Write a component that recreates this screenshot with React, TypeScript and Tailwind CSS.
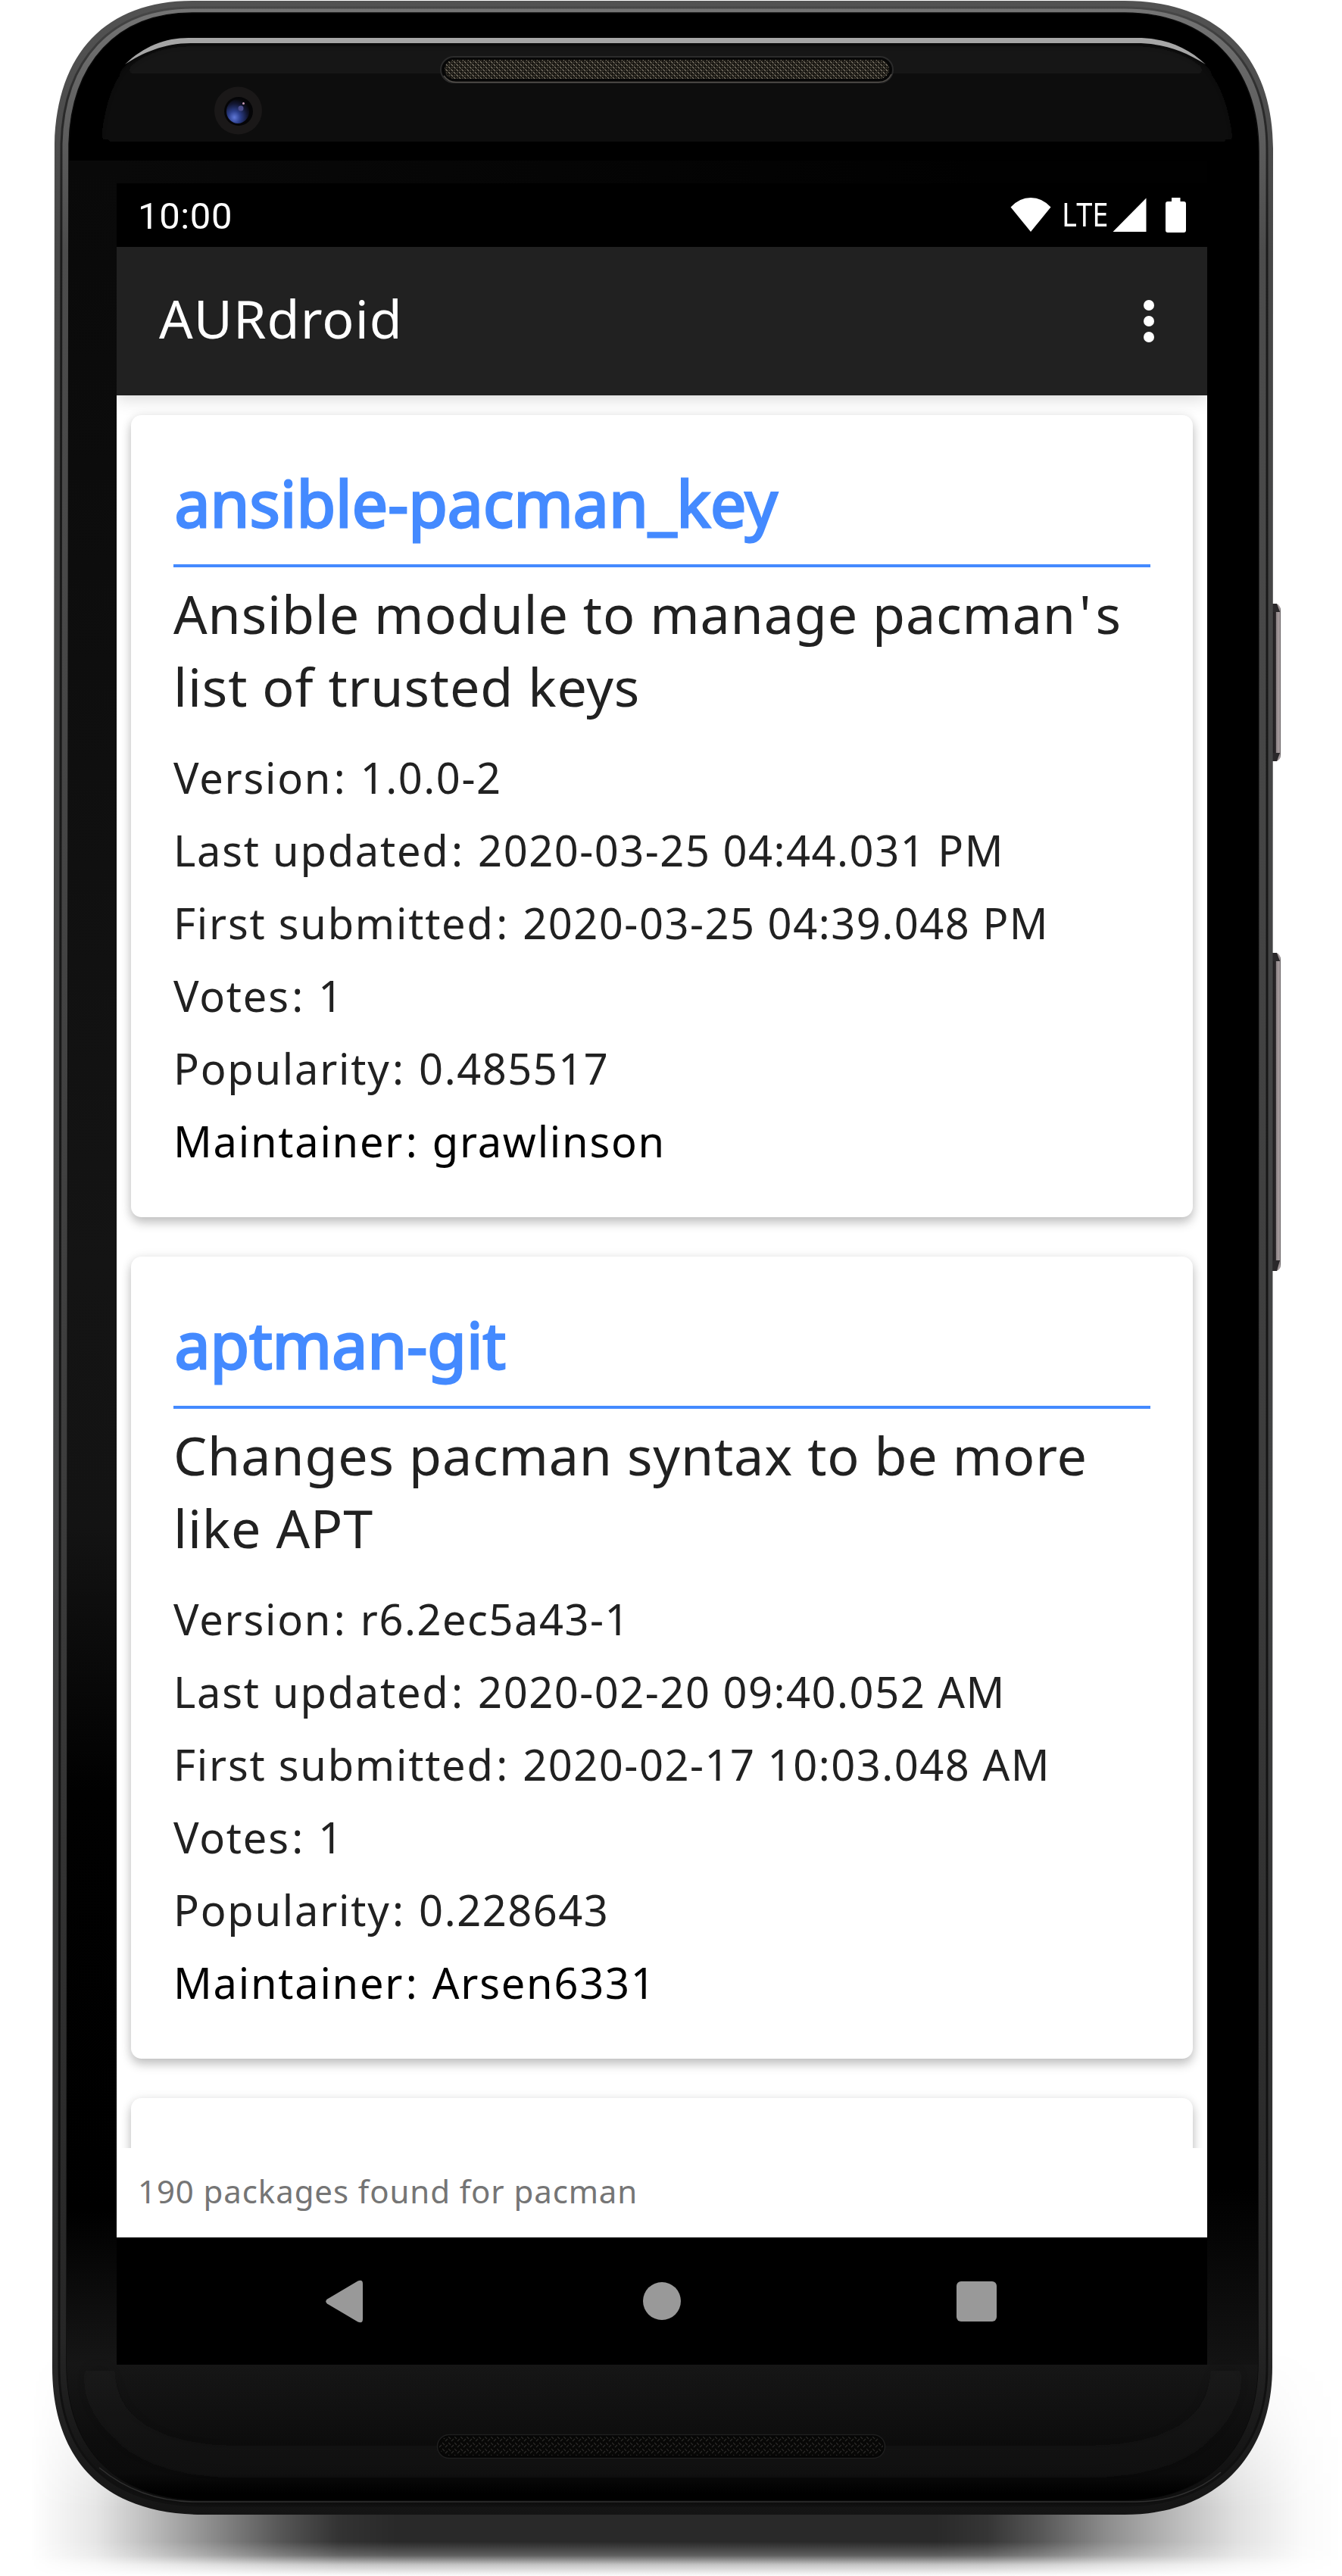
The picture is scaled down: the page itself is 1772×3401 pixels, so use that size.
import type { ReactNode } from 'react';

type Detail = { label: string; value: string };

type Pkg = {
  name: string;
  description: string[];
  details: Detail[];
  maintainer: string;
};

const packages: Pkg[] = [
  {
    name: 'ansible-pacman_key',
    description: ["Ansible module to manage pacman's", 'list of trusted keys'],
    details: [
      { label: 'Version', value: '1.0.0-2' },
      { label: 'Last updated', value: '2020-03-25 04:44.031 PM' },
      { label: 'First submitted', value: '2020-03-25 04:39.048 PM' },
      { label: 'Votes', value: '1' },
      { label: 'Popularity', value: '0.485517' },
    ],
    maintainer: 'grawlinson',
  },
  {
    name: 'aptman-git',
    description: ['Changes pacman syntax to be more', 'like APT'],
    details: [
      { label: 'Version', value: 'r6.2ec5a43-1' },
      { label: 'Last updated', value: '2020-02-20 09:40.052 AM' },
      { label: 'First submitted', value: '2020-02-17 10:03.048 AM' },
      { label: 'Votes', value: '1' },
      { label: 'Popularity', value: '0.228643' },
    ],
    maintainer: 'Arsen6331',
  },
];

const OUTER =
  'M254 1 H1485 C1610 1 1681 76 1681 196 L1680 3125 C1680 3248 1600 3320 1485 3320 H268 C140 3320 69 3250 69 3125 L72 190 C75 70 140 1 254 1 Z';
const SEAM =
  'M254 10 H1485 C1604 10 1673 82 1673 198 L1673 3125 C1673 3240 1597 3308 1485 3308 H268 C147 3308 78 3244 78 3125 L81 190 C84 78 147 10 254 10 Z';
const GLASS =
  'M254 17 H1485 C1592 17 1662 86 1662 200 L1661 3120 C1661 3232 1592 3301 1485 3301 H268 C156 3301 88 3236 88 3120 L91 190 C94 84 154 17 254 17 Z';

function DeviceBody() {
  return (
    <svg className="absolute inset-0" width="1772" height="3401" viewBox="0 0 1772 3401" fill="none">
      <defs>
        <linearGradient id="floorX" x1="40" x2="1772" y1="0" y2="0" gradientUnits="userSpaceOnUse">
          <stop offset="0" stopColor="#000" stopOpacity="0" />
          <stop offset="0.05" stopColor="#000" stopOpacity="0.1" />
          <stop offset="0.09" stopColor="#000" stopOpacity="0.26" />
          <stop offset="0.13" stopColor="#000" stopOpacity="0.42" />
          <stop offset="0.19" stopColor="#000" stopOpacity="0.66" />
          <stop offset="0.235" stopColor="#000" stopOpacity="0.8" />
          <stop offset="0.28" stopColor="#000" stopOpacity="0.84" />
          <stop offset="0.69" stopColor="#000" stopOpacity="0.84" />
          <stop offset="0.73" stopColor="#000" stopOpacity="0.79" />
          <stop offset="0.77" stopColor="#000" stopOpacity="0.66" />
          <stop offset="0.82" stopColor="#000" stopOpacity="0.45" />
          <stop offset="0.87" stopColor="#000" stopOpacity="0.28" />
          <stop offset="0.92" stopColor="#000" stopOpacity="0.12" />
          <stop offset="0.97" stopColor="#000" stopOpacity="0.02" />
          <stop offset="1" stopColor="#000" stopOpacity="0" />
        </linearGradient>
        <linearGradient id="floorY" x1="0" x2="0" y1="3100" y2="3401" gradientUnits="userSpaceOnUse">
          <stop offset="0" stopColor="#fff" stopOpacity="0" />
          <stop offset="0.3" stopColor="#fff" stopOpacity="0.35" />
          <stop offset="0.7" stopColor="#fff" stopOpacity="1" />
          <stop offset="0.85" stopColor="#fff" stopOpacity="1" />
          <stop offset="0.91" stopColor="#fff" stopOpacity="0.75" />
          <stop offset="0.95" stopColor="#fff" stopOpacity="0.28" />
          <stop offset="1" stopColor="#fff" stopOpacity="0.01" />
        </linearGradient>
        <mask id="floorMask" maskUnits="userSpaceOnUse" x="0" y="3100" width="1772" height="301">
          <rect y="3100" width="1772" height="301" fill="url(#floorY)" />
        </mask>
        <linearGradient id="rim" x1="0" x2="0" y1="0" y2="3320" gradientUnits="userSpaceOnUse">
          <stop offset="0" stopColor="#525252" />
          <stop offset="0.1" stopColor="#474747" />
          <stop offset="0.6" stopColor="#414243" />
          <stop offset="0.93" stopColor="#2a2a2a" />
          <stop offset="1" stopColor="#141414" />
        </linearGradient>
        <linearGradient id="rimInner" x1="0" x2="0" y1="0" y2="3320" gradientUnits="userSpaceOnUse">
          <stop offset="0" stopColor="#777" />
          <stop offset="0.03" stopColor="#666" />
          <stop offset="0.1" stopColor="#4c4c4c" />
          <stop offset="0.6" stopColor="#3c3c3c" />
          <stop offset="0.93" stopColor="#262626" />
          <stop offset="1" stopColor="#0c0c0c" />
        </linearGradient>
        <linearGradient id="seam" x1="0" x2="0" y1="0" y2="3320" gradientUnits="userSpaceOnUse">
          <stop offset="0" stopColor="#4a4a4a" />
          <stop offset="0.04" stopColor="#2b2b2b" />
          <stop offset="0.1" stopColor="#1b1b1b" />
          <stop offset="1" stopColor="#101010" />
        </linearGradient>
        <linearGradient id="glassLeft" x1="0" x2="0" y1="212" y2="3122" gradientUnits="userSpaceOnUse">
          <stop offset="0" stopColor="#090909" />
          <stop offset="0.5" stopColor="#141414" />
          <stop offset="0.62" stopColor="#131313" />
          <stop offset="0.74" stopColor="#010101" />
          <stop offset="0.93" stopColor="#000" />
          <stop offset="1" stopColor="#161616" />
        </linearGradient>
        <linearGradient id="glassRight" x1="0" x2="0" y1="212" y2="3122" gradientUnits="userSpaceOnUse">
          <stop offset="0" stopColor="#000" />
          <stop offset="0.92" stopColor="#000" />
          <stop offset="1" stopColor="#131313" />
        </linearGradient>
        <linearGradient id="browStrip" x1="154" x2="1300" y1="0" y2="0" gradientUnits="userSpaceOnUse">
          <stop offset="0" stopColor="#090909" />
          <stop offset="1" stopColor="#010101" />
        </linearGradient>
        <linearGradient id="forehead" x1="0" x2="0" y1="57" y2="212" gradientUnits="userSpaceOnUse">
          <stop offset="0" stopColor="#161616" />
          <stop offset="0.5" stopColor="#0d0d0d" />
          <stop offset="1" stopColor="#030303" />
        </linearGradient>
        <linearGradient id="chin" x1="0" x2="0" y1="3122" y2="3301" gradientUnits="userSpaceOnUse">
          <stop offset="0" stopColor="#161616" />
          <stop offset="0.55" stopColor="#0d0d0d" />
          <stop offset="0.8" stopColor="#0b0b0b" />
          <stop offset="0.95" stopColor="#000" />
        </linearGradient>
        <radialGradient id="lens" cx="0.35" cy="0.75" r="0.75">
          <stop offset="0" stopColor="#6078d8" />
          <stop offset="0.35" stopColor="#2c3f8c" />
          <stop offset="0.75" stopColor="#121632" />
          <stop offset="1" stopColor="#08080c" />
        </radialGradient>
        <pattern id="mesh" width="7" height="7" patternUnits="userSpaceOnUse">
          <rect width="7" height="7" fill="#15130f" />
          <path d="M0.5 0.5 L3 3 M4 4 L6.5 6.5" stroke="#817a6c" strokeWidth="1.3" />
          <path d="M4.5 1 L6 2.5 M1 4.5 L2.5 6" stroke="#4d483e" strokeWidth="1.2" />
        </pattern>
        <pattern id="meshDark" width="8" height="8" patternUnits="userSpaceOnUse">
          <rect width="8" height="8" fill="#070706" />
          <path d="M0 1 L3 4 M4 7 L7 4" stroke="#2b2a28" strokeWidth="1.2" />
        </pattern>
        <linearGradient id="button" x1="1680" x2="1691" y1="0" y2="0" gradientUnits="userSpaceOnUse">
          <stop offset="0" stopColor="#1c1a1c" />
          <stop offset="0.4" stopColor="#2c292b" />
          <stop offset="0.5" stopColor="#8f8688" />
          <stop offset="0.85" stopColor="#aaa0a2" />
          <stop offset="1" stopColor="#4c494b" />
        </linearGradient>
        <clipPath id="glassClip">
          <path d={GLASS} />
        </clipPath>
        <clipPath id="foreheadClip">
          <rect x="88" y="50" width="1580" height="162" />
        </clipPath>
        <filter id="soft" filterUnits="userSpaceOnUse" x="60" y="3040" width="1640" height="300">
          <feGaussianBlur stdDeviation="14" />
        </filter>
        <filter id="softEdge" filterUnits="userSpaceOnUse" x="60" y="20" width="1640" height="260">
          <feGaussianBlur stdDeviation="5" />
        </filter>
      </defs>

      <rect x="40" y="3100" width="1732" height="301" fill="url(#floorX)" mask="url(#floorMask)" />

      <path d="M1680 797 h5 q6 2 6 9 v190 q0 8 -6 9 h-5 Z" fill="url(#button)" />
      <path d="M1680 1258 h5 q6 2 6 9 v402 q0 8 -6 9 h-5 Z" fill="url(#button)" />
      <path d="M1681 797 h5 l4 11 h-9 Z M1681 1005 h5 l4 -11 h-9 Z" fill="#2a282a" />
      <path d="M1681 1258 h5 l4 11 h-9 Z M1681 1678 h5 l4 -14 h-9 Z" fill="#2a282a" />

      <path d={OUTER} fill="url(#rim)" />
      <path d={SEAM} fill="url(#rimInner)" stroke="url(#seam)" strokeWidth="3" />
      <path d={GLASS} fill="#000" stroke="#0a0a0a" strokeWidth="1.5" />

      <g clipPath="url(#glassClip)">
        <g clipPath="url(#foreheadClip)">
          <path
            d="M130 250 C130 150 148 104 172 84 C195 66 222 58 252 58 H1500 C1535 58 1566 68 1588 86 C1615 110 1632 160 1632 250 Z"
            fill="url(#forehead)"
            filter="url(#softEdge)"
          />
        </g>
        <rect x="88" y="212" width="66" height="2910" fill="url(#glassLeft)" />
        <rect x="154" y="212" width="1440" height="30" fill="url(#browStrip)" />
        <rect x="1594" y="212" width="70" height="2910" fill="url(#glassRight)" />
        <rect x="88" y="3122" width="1576" height="180" fill="url(#chin)" />
        <path
          d="M130 3130 C134 3205 195 3246 300 3250 H1450 C1555 3246 1616 3205 1620 3130"
          stroke="#2a2a2a"
          strokeOpacity="0.35"
          strokeWidth="24"
          filter="url(#soft)"
        />
      </g>

      <path
        d="M165 85 C190 61 218 50 249 50 H1501 C1538 50 1568 62 1592 85 C1562 66 1534 57 1500 57 H252 C216 57 188 70 165 85 Z"
        fill="#a6a6a6"
      />
      <path d="M131 3258 C165 3286 206 3302 254 3303 H1500 C1545 3303 1584 3288 1612 3264" stroke="#303030" strokeWidth="1.5" />

      <rect x="582" y="75" width="597" height="34" rx="17" fill="#070707" stroke="#2b2b2b" strokeWidth="2" />
      <path d="M586 100 Q592 108.500 602 108.500 H1160 Q1172 108.500 1177 98" stroke="#55514c" strokeWidth="1.5" />
      <rect x="587" y="79" width="587" height="25" rx="12.500" fill="url(#mesh)" />

      <circle cx="314.500" cy="146" r="31.500" fill="#1a1818" />
      <circle cx="315" cy="147" r="19" fill="#050507" />
      <ellipse cx="314" cy="147" rx="15" ry="16" fill="url(#lens)" />
      <circle cx="318" cy="143" r="3.500" fill="#4a4c8a" />
      <circle cx="321.500" cy="136.500" r="1.500" fill="#c99ab4" />

      <rect x="577.500" y="3214.500" width="591" height="31" rx="15.500" fill="#050505" stroke="#1f1f1f" strokeWidth="1.5" />
      <rect x="580" y="3217" width="586" height="25" rx="12.500" fill="url(#meshDark)" />
    </svg>
  );
}

function StatusBar() {
  return (
    <header className="flex h-[84px] items-start bg-black text-white">
      <span className="mt-[15px] ml-7 font-[Roboto,sans-serif] text-[49px] leading-[58px] tracking-[0.6px]">10:00</span>
      <svg className="mt-[19px] ml-auto h-[45px] w-[54px]" viewBox="0 0 54 45" fill="white">
        <path d="M0.500 12.500 Q12 0 27 0 Q42 0 53.500 12.500 L27 45 Z" />
      </svg>
      <span className="mt-[12px] ml-[14px] w-[62px] origin-left scale-x-[0.885] font-['Noto_Sans',sans-serif] text-[43px] leading-[58px]">
        LTE
      </span>
      <svg className="mt-[19px] ml-[5px] h-[45px] w-[45px]" viewBox="0 0 45 45" fill="white">
        <path d="M0.500 45 L44.500 0.500 V45 Z" />
      </svg>
      <svg className="mt-[19px] mr-[28px] ml-[25px] h-[46px] w-[27px]" viewBox="0 0 27 46" fill="white">
        <path d="M8 0 H19.500 V5 H24 Q27 5 27 8 V43 Q27 46 24 46 H3 Q0 46 0 43 V8 Q0 5 3 5 H8 Z" />
      </svg>
    </header>
  );
}

function AppBar() {
  return (
    <div className="relative z-10 flex h-[196px] items-center justify-between bg-[#212121] pr-[70px] pl-14 text-white shadow-[0_4px_22px_rgba(0,0,0,0.16)]">
      <h1 className="-mt-[9px] text-[70px] leading-[96px] tracking-[1.05px]">AURdroid</h1>
      <div className="-mt-px flex flex-col gap-[7px]">
        <span className="size-[14px] rounded-full bg-white" />
        <span className="size-[14px] rounded-full bg-white" />
        <span className="size-[14px] rounded-full bg-white" />
      </div>
    </div>
  );
}

function Card({ children }: { children?: ReactNode }) {
  return (
    <section className="mx-[19px] h-[1059px] shrink-0 rounded-[14px] bg-white px-14 pt-[59px] shadow-[0_8px_14px_rgba(0,0,0,0.2),0_1px_14px_rgba(0,0,0,0.1)]">
      {children}
    </section>
  );
}

function DescriptionLine({ text }: { text: string }) {
  const [head, tail] = text.split("'");
  return (
    <p>
      {head}
      {tail !== undefined && (
        <>
          <span className="mr-[5px] ml-[4px]">'</span>
          {tail}
        </>
      )}
    </p>
  );
}

function DetailLine({ label, children }: { label: string; children: ReactNode }) {
  return (
    <p>
      {label}
      <span className="mr-[2px] ml-[2.500px]">:</span> {children}
    </p>
  );
}

function PackageCard({ pkg }: { pkg: Pkg }) {
  return (
    <Card>
      <h2 className="border-b-4 border-[#448aff] pb-6 pl-[1.500px] text-[84px] leading-[114px] text-[#448aff] [-webkit-text-stroke:2.8px_#448aff]">
        {pkg.name}
      </h2>
      <div className="mt-[13px] text-[70px] leading-[96px] tracking-[0.84px] whitespace-nowrap text-[#212121]">
        {pkg.description.map((line) => (
          <DescriptionLine key={line} text={line} />
        ))}
      </div>
      <div className="mt-6 text-[56px] leading-[96px] tracking-[0.03125em] whitespace-nowrap text-[#212121]">
        {pkg.details.map((d) => (
          <DetailLine key={d.label} label={d.label}>
            <span className="tracking-[1.500px]">{d.value}</span>
          </DetailLine>
        ))}
        <div className="text-black">
          <DetailLine label="Maintainer">{pkg.maintainer}</DetailLine>
        </div>
      </div>
    </Card>
  );
}

function NavBar() {
  return (
    <nav className="flex h-[168px] items-center bg-black pl-[276px] text-[#999]">
      <svg className="h-[57px] w-[50px]" viewBox="0 0 50 57" fill="currentColor">
        <path d="M2 25.500 L42.500 1.500 Q49 -1 49 5 V52 Q49 58 42.500 55.500 L2 31.500 Q-1.500 28.500 2 25.500 Z" />
      </svg>
      <span className="ml-[369px] size-[50px] rounded-full bg-[#999]" />
      <span className="ml-[363.500px] h-[53px] w-[53px] rounded-[6px] bg-[#999]" />
    </nav>
  );
}

export default function App() {
  return (
    <main className="relative h-[3401px] w-[1772px] overflow-hidden bg-white pt-[242px] pl-[154px] font-['Noto_Sans',sans-serif]">
      <DeviceBody />
      <div className="relative flex h-[2880px] w-[1440px] flex-col overflow-hidden bg-white">
        <StatusBar />
        <AppBar />
        <div className="flex min-h-0 flex-1 flex-col gap-[52px] overflow-hidden pt-[26px]">
          {packages.map((pkg) => (
            <PackageCard key={pkg.name} pkg={pkg} />
          ))}
          <Card />
        </div>
        <footer className="flex h-[118px] items-center bg-white px-7 pb-[6px] text-[42px] leading-[57px] tracking-[0.9px] text-[#757575]">
          190 packages found for pacman
        </footer>
        <NavBar />
      </div>
    </main>
  );
}
